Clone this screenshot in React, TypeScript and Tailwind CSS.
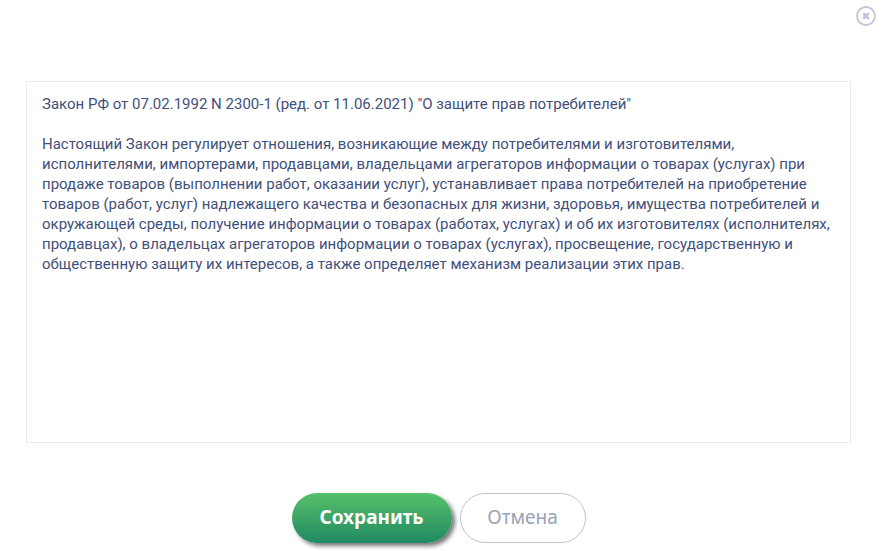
export default function App() {
  const text = `Закон РФ от 07.02.1992 N 2300-1 (ред. от 11.06.2021) "О защите прав потребителей"

Настоящий Закон регулирует отношения, возникающие между потребителями и изготовителями, исполнителями, импортерами, продавцами, владельцами агрегаторов информации о товарах (услугах) при продаже товаров (выполнении работ, оказании услуг), устанавливает права потребителей на приобретение товаров (работ, услуг) надлежащего качества и безопасных для жизни, здоровья, имущества потребителей и окружающей среды, получение информации о товарах (работах, услугах) и об их изготовителях (исполнителях, продавцах), о владельцах агрегаторов информации о товарах (услугах), просвещение, государственную и общественную защиту их интересов, а также определяет механизм реализации этих прав.`;
  return (
    <main className="flex flex-col bg-white">
      <header className="flex justify-end px-1.5 pt-1.5">
        <button type="button" aria-label="Закрыть" className="size-5 text-[#bfc4dc]">
          <svg viewBox="0 0 20 20" className="size-5" fill="none" stroke="currentColor">
            <circle cx="10" cy="10" r="9" strokeWidth="1.8" />
            <path d="M7.2 7.2l5.6 5.6M12.8 7.2l-5.6 5.6" strokeWidth="2.6" />
          </svg>
        </button>
      </header>
      <div className="mt-[55px] flex pr-[31px] pl-[26px]">
        <textarea
          aria-label="Текст"
          defaultValue={text}
          className="h-[362px] w-full resize-none border border-[#ebebee] px-[15px] py-3 font-['Roboto',sans-serif] text-[15px] leading-5 text-[#42507a] outline-none"
        />
      </div>
      <footer className="mt-[50px] flex justify-center gap-2 pr-[31px] pb-2 pl-[26px] font-['Noto_Sans',sans-serif] text-[19px] leading-6">
        <button type="button" className="h-[50px] w-40 rounded-full bg-linear-to-b from-[#55c068] to-[#1f8a62] pb-0.5 font-bold text-white shadow-[3px_3px_4px_#777]">
          Сохранить
        </button>
        <button type="button" className="h-[50px] w-[126px] rounded-full border border-[#bcc2d4] pb-0.5 text-[#98a1b6]">
          Отмена
        </button>
      </footer>
    </main>
  );
}
